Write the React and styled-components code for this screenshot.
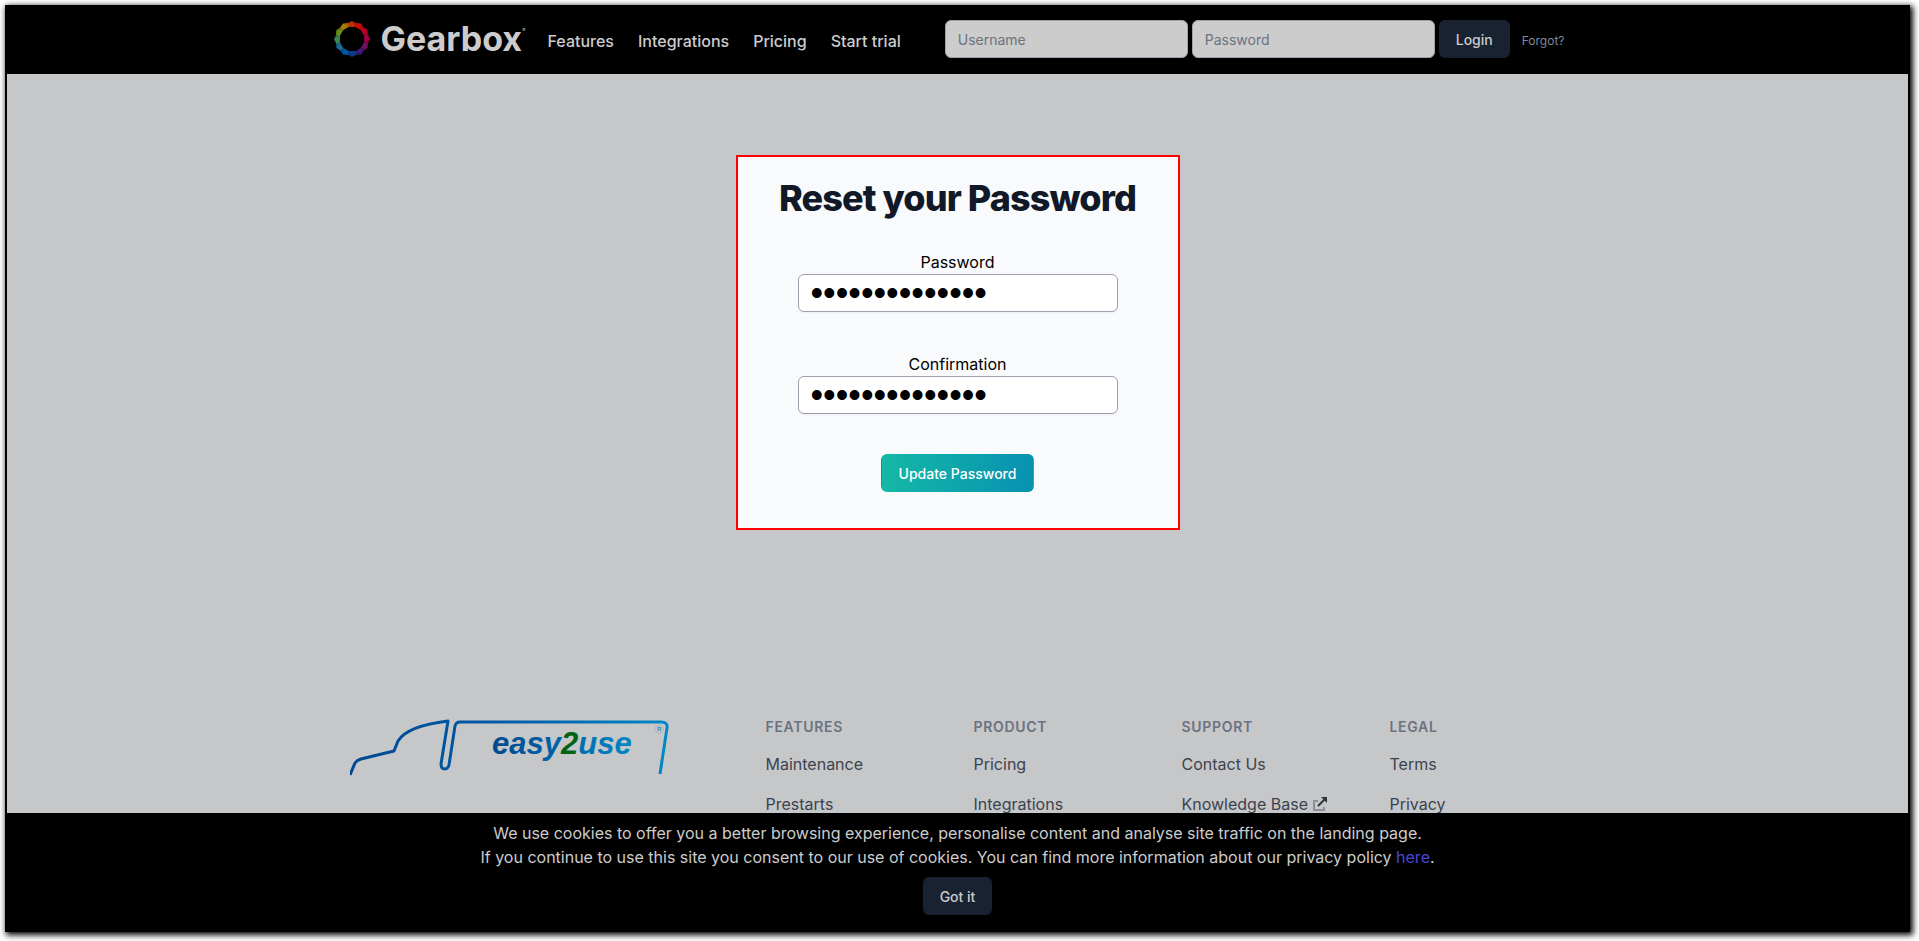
import React from 'react'
import styled, { createGlobalStyle } from 'styled-components'

const FOOTER_COLUMNS = [
  { title: 'Features', links: [{ label: 'Maintenance' }, { label: 'Prestarts' }] },
  { title: 'Product', links: [{ label: 'Pricing' }, { label: 'Integrations' }] },
  { title: 'Support', links: [{ label: 'Contact Us' }, { label: 'Knowledge Base', external: true }] },
  { title: 'Legal', links: [{ label: 'Terms' }, { label: 'Privacy' }] },
]

const NAV_LINKS = ['Features', 'Integrations', 'Pricing', 'Start trial']

// Each wedge of the gear ring gets its own colour, clockwise from the top
const RING_COLORS = [
  '#c03000', '#c80a08', '#b80022', '#a00040', '#701060', '#3c1c78',
  '#0a3c8c', '#0058a4', '#1c6c90', '#3c8850', '#6c8c18', '#b07c00',
]

function ringPoint(radius, degrees) {
  const rad = ((degrees - 90) * Math.PI) / 180
  return `${(18 + radius * Math.cos(rad)).toFixed(2)},${(18 + radius * Math.sin(rad)).toFixed(2)}`
}

function GearboxMark() {
  return (
    <svg width="36" height="36" viewBox="0 0 36 36" aria-hidden="true">
      {RING_COLORS.map((color, i) => {
        const a = i * 30
        const wedge = [
          ringPoint(16.4, a - 16),
          ringPoint(18, a),
          ringPoint(16.4, a + 16),
          ringPoint(12.6, a + 16),
          ringPoint(12.6, a - 16),
        ]
        const facet = [ringPoint(18, a), ringPoint(16.4, a + 15), ringPoint(12.6, a + 15)]
        return (
          <g key={color}>
            <polygon points={wedge.join(' ')} fill={color} />
            <polygon points={facet.join(' ')} fill="#000000" fillOpacity="0.18" />
          </g>
        )
      })}
    </svg>
  )
}

function TruckLogo() {
  return (
    <svg width="324" height="60" viewBox="3 -2 324 60" role="img" aria-label="easy2use">
      <defs>
        <linearGradient id="truck" gradientUnits="userSpaceOnUse" x1="0" y1="0" x2="324" y2="0">
          <stop offset="0" stopColor="#004890" />
          <stop offset="0.5" stopColor="#005ca8" />
          <stop offset="1" stopColor="#0088c8" />
        </linearGradient>
        <linearGradient id="word" gradientUnits="userSpaceOnUse" x1="145" y1="0" x2="282" y2="0">
          <stop offset="0" stopColor="#004890" />
          <stop offset="1" stopColor="#0084c4" />
        </linearGradient>
      </defs>
      <g fill="none" stroke="url(#truck)" strokeWidth="3" strokeLinejoin="round">
        <path d="M3 56 L8 44 Q10 41 14 40 L47 32 L51 22 Q60 7 101 2 L94 45 Q94 50 98 50 Q101 50 102 46 L108 7 Q109 3 113 3 L314 3 Q321 3 320 9 L313 55" />
      </g>
      <text x="145" y="35" fontFamily="'Liberation Sans', Arial, sans-serif" fontSize="31" fontWeight="700" fontStyle="italic" fill="url(#word)">
        easy<tspan fill="#006414">2</tspan>use
      </text>
      <circle cx="312" cy="10" r="4" fill="none" stroke="#7fa4bc" strokeDasharray="1 1" />
      <text x="310" y="12" fontFamily="'Liberation Sans', Arial, sans-serif" fontSize="6" fontWeight="700" fill="#3c84b0">R</text>
    </svg>
  )
}

function ExternalIcon() {
  return (
    <svg width="16" height="16" viewBox="0 0 16 16" fill="none" strokeWidth="2" aria-hidden="true">
      <path d="M6 5H2v9h10v-3" stroke="#8d9197" />
      <path d="M6 10L14 2" stroke="#2d3540" />
      <path d="M9 1h6v6z" fill="#2d3540" />
    </svg>
  )
}

export default function App() {
  return (
    <>
      <GlobalStyle />
      <Frame>
        <Header>
          <HeaderInner>
            <Brand href="#">
              <GearboxMark />
              <BrandName>Gearbox<BrandDot>°</BrandDot></BrandName>
            </Brand>
            <Nav>
              {NAV_LINKS.map((label) => (
                <NavLink key={label} href="#">{label}</NavLink>
              ))}
            </Nav>
            <LoginForm onSubmit={(e) => e.preventDefault()}>
              <LoginInput type="text" placeholder="Username" aria-label="Username" />
              <LoginInput type="password" placeholder="Password" aria-label="Password" />
              <DarkButton type="submit">Login</DarkButton>
              <ForgotLink href="#">Forgot?</ForgotLink>
            </LoginForm>
          </HeaderInner>
        </Header>

        <Page>
          <ResetCard onSubmit={(e) => e.preventDefault()}>
            <Title>Reset your Password</Title>
            <Field>
              <Label htmlFor="password">Password</Label>
              <PasswordInput id="password" type="password" defaultValue="correcthorse12" />
            </Field>
            <Field>
              <Label htmlFor="confirmation">Confirmation</Label>
              <PasswordInput id="confirmation" type="password" defaultValue="correcthorse12" />
            </Field>
            <UpdateButton type="submit">Update Password</UpdateButton>
          </ResetCard>

          <Footer>
            <TruckLogo />
            <FooterColumns>
              {FOOTER_COLUMNS.map((column) => (
                <div key={column.title}>
                  <ColumnTitle>{column.title}</ColumnTitle>
                  <LinkList>
                    {column.links.map((link) => (
                      <li key={link.label}>
                        <FooterLink href="#">
                          {link.label}
                          {link.external && <ExternalIcon />}
                        </FooterLink>
                      </li>
                    ))}
                  </LinkList>
                </div>
              ))}
            </FooterColumns>
          </Footer>
        </Page>

        <CookieBar>
          <p>We use cookies to offer you a better browsing experience, personalise content and analyse site traffic on the landing page.</p>
          <p>
            If you continue to use this site you consent to our use of cookies. You can find more information about our privacy policy <CookieLink href="#">here</CookieLink>.
          </p>
          <DarkButton type="button">Got it</DarkButton>
        </CookieBar>
      </Frame>
    </>
  )
}

// ==================== STYLED COMPONENTS ====================
const GlobalStyle = createGlobalStyle`
  *, *::before, *::after {
    box-sizing: border-box;
  }
  body {
    margin: 0;
    background: #ffffff;
    font-family: Inter, 'Liberation Sans', sans-serif;
    font-size: 16px;
    line-height: 24px;
  }
  h1, h2, p, ul {
    margin: 0;
    padding: 0;
  }
  a {
    text-decoration: none;
  }
  input, button {
    font-family: inherit;
  }
`
const Frame = styled.div`
  display: flex;
  flex-direction: column;
  height: calc(100vh - 14px);
  margin: 5px 9px 9px 5px;
  padding: 0 2px;
  background: #000000;
  box-shadow: 2px 2px 6px 1px #000000;
`
const Header = styled.header`
  flex: none;
  padding: 15px 0 16px;
`
const HeaderInner = styled.div`
  display: flex;
  align-items: center;
  max-width: 1248px;
  margin: 0 auto;
`
const Brand = styled.a`
  display: flex;
  align-items: center;
  gap: 11px;
  width: 214px;
  color: #cccccc;
`
const BrandName = styled.span`
  display: flex;
  font-size: 34px;
  font-weight: 700;
  line-height: 36px;
`
const BrandDot = styled.span`
  font-size: 8px;
  font-weight: 400;
  line-height: 20px;
`
const Nav = styled.nav`
  display: flex;
  gap: 24px;
  padding-top: 4px;
`
const NavLink = styled.a`
  color: #cccccc;
  font-weight: 500;
`
const LoginForm = styled.form`
  display: flex;
  align-items: center;
  gap: 4px;
  margin-left: 44px;
`
const TextInput = styled.input`
  height: 38px;
  padding: 8px 12px;
  border: 1px solid #9ca3af;
  border-radius: 6px;
  font-size: 14px;
  line-height: 20px;
`
const LoginInput = styled(TextInput)`
  width: 243px;
  background: #cccccc;
  &::placeholder {
    color: #6b7280;
  }
`
const Button = styled.button`
  height: 38px;
  padding: 9px 16px 7px;
  border: 1px solid transparent;
  border-radius: 6px;
  font-size: 14px;
  font-weight: 500;
  line-height: 20px;
`
const DarkButton = styled(Button)`
  background: #192231;
  color: #cccccc;
`
const ForgotLink = styled.a`
  margin-left: 8px;
  padding-top: 4px;
  color: #7f8a9c;
  font-size: 12px;
  line-height: 16px;
`
const Page = styled.main`
  flex: 1;
  min-height: 0;
  overflow: hidden;
  padding-top: 81px;
  background: #c6c7c9;
`
const ResetCard = styled.form`
  display: flex;
  flex-direction: column;
  align-items: center;
  width: 444px;
  margin: 0 auto;
  padding: 21px 24px 36px;
  border: 2px solid #ff0000;
  background: #f9fafb;
`
const Title = styled.h1`
  margin-bottom: 32px;
  color: #111827;
  font-size: 36px;
  font-weight: 800;
  line-height: 40px;
  letter-spacing: -0.025em;
`
const Field = styled.div`
  display: flex;
  flex-direction: column;
  align-items: center;
  margin-bottom: 40px;
`
const Label = styled.label`
  color: #000000;
`
const PasswordInput = styled(TextInput)`
  width: 320px;
  padding: 0 12px;
  background: #ffffff;
  color: #000000;
  font-family: 'Liberation Sans', Arial, sans-serif;
  font-size: 36px;
  line-height: 36px;
  box-shadow: 0 1px 2px rgba(0, 0, 0, 0.05);
`
const UpdateButton = styled(Button)`
  padding: 9px 17px 7px;
  background: linear-gradient(to right, #14b8a6, #0891b2);
  color: #ffffff;
`
const Footer = styled.footer`
  display: grid;
  grid-template-columns: repeat(3, 1fr);
  gap: 32px;
  max-width: 1216px;
  margin: 187px auto 0;
`
const FooterColumns = styled.div`
  display: grid;
  grid-column: span 2;
  grid-template-columns: repeat(4, 1fr);
  gap: 32px;
`
const ColumnTitle = styled.h2`
  color: #6b7280;
  font-size: 14px;
  font-weight: 600;
  line-height: 20px;
  letter-spacing: 0.05em;
  text-transform: uppercase;
`
const LinkList = styled.ul`
  display: flex;
  flex-direction: column;
  gap: 16px;
  margin-top: 15px;
  list-style: none;
`
const FooterLink = styled.a`
  display: flex;
  align-items: center;
  gap: 4px;
  color: #3c434f;
`
const CookieBar = styled.section`
  display: flex;
  flex: none;
  flex-direction: column;
  align-items: center;
  padding: 8px 0 17px;
  color: #cccccc;
  text-align: center;
  button {
    margin-top: 8px;
  }
`
const CookieLink = styled.a`
  color: #4a46d8;
`
